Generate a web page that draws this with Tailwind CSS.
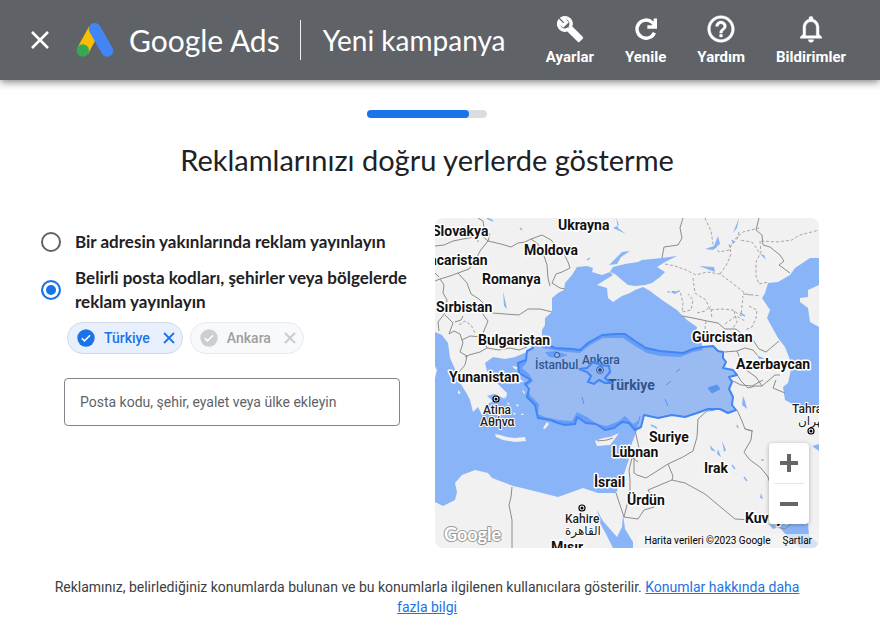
<!DOCTYPE html>
<html lang="tr">
  <head>
    <meta charset="UTF-8" />
    <meta name="viewport" content="width=device-width, initial-scale=1.0" />
    <title>Google Ads - Yeni kampanya</title>
    <script src="https://cdn.jsdelivr.net/npm/@tailwindcss/browser@4"></script>
  </head>
  <body class="min-h-screen bg-white font-['Roboto',sans-serif] text-[#202124]">

    <!-- Header -->
    <header class="flex h-20 items-center bg-[#5f6368] pl-7 pr-[34px] text-white shadow-[0_2px_8px_rgba(0,0,0,0.5)]">
      <button type="button" aria-label="Kapat" class="flex h-6 w-6 items-center justify-center">
        <svg class="h-[18px] w-[18px]" viewBox="0 0 18 18" fill="none" stroke="currentColor" stroke-width="2.6"><path d="M1 1l16 16M17 1L1 17"/></svg>
      </button>
      <a href="#" class="ml-6 flex items-center gap-[15px]">
        <svg class="h-[34px] w-[38px]" viewBox="0 0 38 34">
          <path d="M13 3.500L23.500 9.500L12 31L1.500 24.500z" fill="#fbbc04"/>
          <path d="M18.800 6L31.200 27.800" stroke="#4285f4" stroke-width="12" stroke-linecap="round"/>
          <circle cx="6.800" cy="27.500" r="6.200" fill="#34a853"/>
        </svg>
        <span class="font-['Lato',sans-serif] text-[30px] leading-10">Google Ads</span>
      </a>
      <div class="ml-5 h-10 w-px bg-white/90"></div>
      <h1 class="ml-[22px] whitespace-nowrap font-['Lato',sans-serif] text-[28px] leading-10">Yeni kampanya</h1>
      <nav class="ml-auto flex gap-[31px] text-[15px] font-bold leading-5">
        <button type="button" class="flex flex-col items-center gap-0.5">
          <svg class="h-8 w-8" viewBox="-2 -2 28 28" fill="currentColor" stroke="currentColor" stroke-width=".9"><path d="M22.610 18.990l-9.080-9.080c.93-2.340.45-5.100-1.440-7C9.790.610 6.210.400 3.660 2.260L7.500 6.110 6.080 7.520 2.250 3.690C.390 6.230.600 9.820 2.900 12.110c1.860 1.860 4.570 2.350 6.890 1.480l9.110 9.110c.39.39 1.020.39 1.410 0l2.300-2.300c.4-.38.4-1.010 0-1.410zm-3 1.600l-9.460-9.460c-.61.45-1.290.72-2 .82-1.360.2-2.790-.21-3.830-1.250C3.370 9.760 2.930 8.500 3 7.260l3.090 3.090 4.240-4.240-3.090-3.090c1.240-.07 2.490.37 3.440 1.310 1.080 1.080 1.490 2.570 1.240 3.960-.12.71-.42 1.370-.88 1.960l9.450 9.450-.88.89z"/><path d="M11 11l8.700 8.700" stroke-width="3.500"/></svg>
          Ayarlar
        </button>
        <button type="button" class="flex flex-col items-center gap-0.5">
          <svg class="h-8 w-8" viewBox="0 0 24 24" fill="none" stroke="currentColor" stroke-width="2.500"><path d="M18.300 14.800A6.800 6.800 0 1 1 16.800 7.200l1.700 1.900M19 4.200v6.300H13"/></svg>
          Yenile
        </button>
        <button type="button" class="flex flex-col items-center gap-0.5">
          <svg class="h-8 w-8" viewBox="0 0 24 24" fill="currentColor" stroke="currentColor" stroke-width=".3"><path d="M11 18h2v-2h-2v2zm1-16C6.480 2 2 6.480 2 12s4.480 10 10 10 10-4.480 10-10S17.520 2 12 2zm0 18c-4.410 0-8-3.590-8-8s3.590-8 8-8 8 3.590 8 8-3.590 8-8 8zm0-14c-2.210 0-4 1.790-4 4h2c0-1.100.9-2 2-2s2 .9 2 2c0 2-3 1.750-3 5h2c0-2.250 3-2.500 3-5 0-2.210-1.790-4-4-4z"/></svg>
          Yardım
        </button>
        <button type="button" class="flex flex-col items-center gap-0.5">
          <svg class="h-8 w-8" viewBox="0 0 24 24" fill="currentColor" stroke="currentColor" stroke-width=".3"><path d="M12 22c1.100 0 2-.9 2-2h-4c0 1.100.9 2 2 2zm6-6v-5c0-3.070-1.630-5.640-4.500-6.320V4c0-.83-.67-1.500-1.500-1.500s-1.500.67-1.500 1.500v.68C7.640 5.360 6 7.920 6 11v5l-2 2v1h16v-1l-2-2zm-2 1H8v-6c0-2.480 1.510-4.500 4-4.500s4 2.020 4 4.500v6z"/></svg>
          Bildirimler
        </button>
      </nav>
    </header>

    <main class="pl-[35px] pr-[61px] pt-[30px]">
      <!-- Progress -->
      <div class="mx-auto h-2 w-[120px] rounded-full bg-[#dadce0]">
        <div class="h-2 w-[102px] rounded-full bg-[#1a73e8]"></div>
      </div>

      <h2 class="mt-6 text-center font-['Lato',sans-serif] text-[29px] leading-9">Reklamlarınızı doğru yerlerde gösterme</h2>

      <div class="mt-10 grid grid-cols-[1fr_384px] gap-6">
        <!-- Location options -->
        <div class="pl-1.5 pt-3">
          <label class="flex items-center gap-3.5 font-['Lato',sans-serif] text-[17px] font-bold leading-6">
            <input type="radio" name="target" class="h-5 w-5 shrink-0 appearance-none rounded-full border-2 border-[#5f6368]" />
            Bir adresin yakınlarında reklam yayınlayın
          </label>
          <label class="mt-3 flex items-center gap-3.5 font-['Lato',sans-serif] text-[17px] font-bold leading-6">
            <input type="radio" name="target" checked class="h-5 w-5 shrink-0 appearance-none rounded-full border-2 border-[#1a73e8] bg-[#1a73e8] shadow-[inset_0_0_0_3px_white]" />
            Belirli posta kodları, şehirler veya bölgelerde reklam yayınlayın
          </label>

          <div class="ml-[26px] mt-2 flex gap-[7px] text-sm font-medium">
            <div class="flex h-8 items-center rounded-full border border-[#d2d9e5] bg-[#e8f0fe] pl-[9px] pr-[7px] text-[#1a73e8]">
              <svg class="h-[18px] w-[18px]" viewBox="0 0 18 18"><circle cx="9" cy="9" r="8.700" fill="#1a73e8"/><path d="M4.800 9.200l2.700 2.700 5.600-5.600" fill="none" stroke="#fff" stroke-width="1.500"/></svg>
              <span class="ml-[9px]">Türkiye</span>
              <button type="button" aria-label="Türkiye konumunu kaldır" class="ml-[13px]"><svg class="h-3 w-3" viewBox="0 0 12 12" fill="none" stroke="currentColor" stroke-width="1.800"><path d="M1 1l10 10M11 1L1 11"/></svg></button>
            </div>
            <div class="flex h-8 items-center rounded-full border border-[#e8eaed] bg-[#f8f9fa] pl-[9px] pr-[7px] text-[#9e9e9e]">
              <svg class="h-[18px] w-[18px]" viewBox="0 0 18 18"><circle cx="9" cy="9" r="8.700" fill="#ccced0"/><path d="M4.800 9.200l2.700 2.700 5.600-5.600" fill="none" stroke="#fff" stroke-width="1.500"/></svg>
              <span class="ml-[9px]">Ankara</span>
              <button type="button" aria-label="Ankara konumunu kaldır" class="ml-[13px] text-[#c8cacc]"><svg class="h-3 w-3" viewBox="0 0 12 12" fill="none" stroke="currentColor" stroke-width="1.800"><path d="M1 1l10 10M11 1L1 11"/></svg></button>
            </div>
          </div>

          <div class="ml-[23px] mr-[11px] mt-6">
            <input type="text" aria-label="Konum" placeholder="Posta kodu, şehir, eyalet veya ülke ekleyin" class="h-12 w-full rounded border border-[#80868b] px-[15px] text-sm placeholder:text-[#5f6368]" />
          </div>
        </div>

        <!-- Map -->
        <div class="relative h-[330px] overflow-hidden rounded-lg bg-[#f1f1f1]">
          <svg class="h-full w-full" viewBox="0 0 384 330" font-family="Roboto, sans-serif">
            <!-- Seas -->
            <g fill="#8ab4f8">
              <path d="M107 130L107 112L110 107L110 100L117 94L117 80L123 75L129 72L130 65L137 57L142 49L152 48L158 50L157 54L167 57L175 54L178 57L170 62L162 67L172 70L173 80L178 84L187 78L195 75L200 72L208 69L215 73L227 82L242 92L252 102L262 109L261 116L266 122L268 132L258 134L245 139L225 138L212 135L200 128L188 120L168 120L155 127L145 135L132 134L118 132z"/>
              <path d="M175 54L178 49L190 46L203 44L207 42L227 40L242 38L230 44L222 49L230 54L225 59L217 65L210 67L200 68L193 67L187 62L180 56z"/>
              <path d="M0 114L7 117L13 125L15 140L20 151L28 157L24 163L32 176L35 182L38 194L43 189L47 197L53 194L51 187L58 183L52 178L62 175L71 180L72 175L63 166L57 158L52 153L50 145L58 139L70 141L80 139L92 134L92 144L87 150L94 156L98 163L92 168L95 177L104 186L103 196L110 199L124 202L137 203L142 194L152 199L162 206L172 208L184 203L190 198L198 206L203 203L202 212L197 225L195 238L191 250L187 262L181 275L163 275L148 270L137 274L123 279L103 274L87 270L78 268L57 260L53 255L40 252L27 257L20 265L22 274L20 282L8 288L0 284z"/>
              <path d="M384 40L375 40L360 50L355 57L343 64L333 65L330 75L327 80L335 92L332 100L343 120L350 129L357 147L353 165L348 169L350 182L363 189L384 191L384 109L375 104L373 90L365 84L365 80L373 79L373 72L384 67z"/>
              <path d="M162 292L168 303L182 319L187 309L188 296L190 311L198 324L198 330L178 330L172 318L165 305z"/>
              <path d="M333 305L373 305L374 317L384 326L384 330L366 330L353 319L344 309L338 311z"/>
              <path d="M283 18L279 28L270 31L278 32L285 26zM304 0L298 15L302 10zM181 0L184 7L178 10L191 16L183 10zM195 33L186 39L182 46L174 47L181 40L187 34zM308 178L307 187L312 191L310 183zM283 231L286 239L282 236zM275 227L281 234L276 232zM268 205L277 212L273 209zM325 36L331 42L329 37zM335 42L341 48zM326 275L328 281L325 280zM264 48L280 54L279 49zM322 137L330 141L324 141zM287 223L291 232L289 234zM235 74L245 73L240 76zM68 73L72 91L69 88zM384 226L377 228L384 233zM110 134L120 133L133 137L124 140L114 139z"/>
              <path d="M85 10l2 2M42 17l1 7M128 12l12-7M52 0l6 3M118 80l2 2M152 42l3-2M297 22l2 3M216 207l6 3M297 247l3 4M309 259l3 4M326 242h3M302 207l1 3M305 95l5 3" stroke="#8ab4f8" stroke-width="1.500"/>
            </g>
            <!-- Islands -->
            <g fill="#f1f1f1">
              <path d="M60 216L65 217L72 219L80 220L90 219L91 223L80 224L68 222L61 219zM160 223L168 220L175 219L184 215L179 222L175 227L162 228zM108 210l4-6 2 2-4 5zM30 168L42 167L55 173L68 177L70 181L58 175L45 174L38 176zM77 148l6 1-2 3zM87 172l3 2-1 2zM67 152l3 2-4 1zM85 161l4 3-4 0zM72 184l3 2-2 1zM81 186l3 1-2 2zM78 194l3 2-2 1zM87 195l2 2-3 0z"/>
              <path d="M0 148l2 4-2 8zM20 160l2 4-3-1zM23 172l3 3-3 1z"/>
            </g>
            <!-- Country borders -->
            <g fill="none" stroke="#8c8c8c" stroke-width="1">
              <path d="M0 28L9 27L18 23L28 21L39 19L46 17L53 23L66 26L76 29L83 25L90 24L96 21L107 17L116 22L122 29L129 36L133 44L135 50L127 54L121 56L117 65L125 70L130 71"/>
              <path d="M96 21L103 26L108 35L112 47L113 60L115 68M53 23L45 33L40 43L34 51L23 55L15 58L5 61L0 63M23 55L32 65L36 76L44 81L49 86L47 93L58 95L70 96L84 97L93 91L105 91L117 94"/>
              <path d="M5 61L9 67L8 75L12 82L10 95L3 104L4 113M10 97L18 105L14 116L19 113L25 116L28 125L25 134L32 138L30 147L24 154M20 104L26 102L28 98M47 95L53 103L48 115L48 121L52 130L45 134L34 137L30 139M52 130L64 132L75 130L84 132L92 129M27 122L35 118L48 119"/>
              <path d="M43 0L48 3L49 10L39 12L31 13M49 10L55 16L53 23M0 55L4 59"/>
              <path d="M248 0L245 10L247 20L243 27L229 29L227 40M324 0L321 12L327 17L328 27L335 29L345 37L349 43L344 47L355 55"/>
              <path d="M247 98L258 100L272 103L283 105L290 111L301 111L308 117L318 122L324 131L331 134L344 123M289 134L302 133L310 130L318 132L322 137M302 133L307 146L311 152L321 159L327 168M301 155L306 163L313 170L320 168L327 168L340 157L345 157M341 162L338 170L350 175M296 162L306 167L317 168L328 162"/>
              <path d="M302 192L307 203L310 211L317 213L316 222L309 234L314 241L326 250L333 259L337 272M318 213L310 211M273 192L263 201L262 219L258 233L248 239L233 246L211 260L202 257L199 255M233 246L238 258L237 262L250 265L270 276L300 301L335 303L345 310M237 262L213 272L219 282L219 289L209 292L203 301L189 299M200 212L204 230L199 236L199 255M197 240L194 252L195 262L195 275L189 299M195 238L203 244M189 299L181 275M77 269L76 279L74 287L77 302L77 330M333 303L335 292L338 288M162 223L172 222L178 220M342 309L350 311L356 306"/>
            </g>
            <!-- Regional borders -->
            <g fill="none" stroke="#a5a5a5" stroke-width="1" stroke-dasharray="3 2">
              <path d="M230 46L240 48L251 52L261 57L272 54L285 56L296 64L311 76L325 78M270 0L276 13L278 26L284 34L294 32L299 22L308 14L324 10M304 14L302 21L294 30M258 60L260 75L271 82L275 92L286 91L298 92L306 98L308 78M308 76L316 77M326 23L342 24L357 22L365 17L384 12M325 23L326 34L321 44L321 58L324 66L333 64M324 34L317 24L304 22M232 74L245 73L248 85L247 94L256 92L258 82L253 76M262 95L270 93L276 88M285 56L292 46L296 36L294 25M299 93L302 104L298 110M314 88L322 92L321 100L317 109L310 112M276 91L277 101M290 106L301 98L310 103M271 103L269 118M24 107L30 103L36 107L40 115"/>
            </g>
            <!-- City and country names under the highlight -->
            <g fill="#000" stroke="#000" stroke-width=".8">
              <circle cx="122" cy="137" r="2.500" fill="#dfe9fb"/>
              <circle cx="165" cy="152" r="3.500" fill="#fff"/><circle cx="165" cy="152" r="1.500"/>
            </g>
            <g fill="#202124" font-weight="500">
              <text x="100" y="151" font-size="12">İstanbul</text>
              <text x="147" y="146" font-size="12">Ankara</text>
              <text x="173" y="172" font-size="14" font-weight="700">Türkiye</text>
            </g>
            <!-- Highlighted region -->
            <path d="M95 122L101 124L107 120L111 126L120 130L137 131L145 132L153 125L160 121L167 117L181 116L190 116L200 123L211 130L225 133L248 135L258 131L267 129L278 128L283 133L288 134L288 140L291 144L288 150L298 152L302 157L294 159L297 164L294 171L298 179L297 187L301 192L293 195L285 191L273 191L262 195L250 199L237 197L223 200L209 197L206 209L200 212L194 205L187 204L179 210L170 212L161 206L151 205L142 199L140 206L130 207L123 205L115 202L103 200L100 187L92 179L94 171L90 166L96 162L84 155L83 145L91 142L92 133L98 130z" fill="#4285f4" fill-opacity=".5" stroke="#4285f4" stroke-width="2" stroke-linejoin="round"/>
            <path d="M273 170L282 167L285 171L277 175zM231 167l5-4M230 181l3 7M272 193l8-1M241 154l4-3M205 198l-2 8M147 179l2 7" fill="#5b93f1" stroke="#5b93f1" stroke-width="1"/>
            <path d="M144 151L152 150L158 144L166 147L174 148L175 154L170 160L176 165L170 165L164 162L159 166L153 164L156 158L152 154z" fill="#4285f4" fill-opacity=".15" stroke="#4285f4" stroke-width="2"/>
            <!-- Labels -->
            <g fill="#111" stroke="#fff" stroke-width="3" stroke-linejoin="round" paint-order="stroke" font-weight="700" font-size="14">
              <text x="-3" y="18">Slovakya</text>
              <text x="123" y="12">Ukrayna</text>
              <text x="89" y="37">Moldova</text>
              <text x="-18" y="47">Macaristan</text>
              <text x="47" y="66">Romanya</text>
              <text x="1" y="94">Sırbistan</text>
              <text x="43" y="127">Bulgaristan</text>
              <text x="14" y="164">Yunanistan</text>
              <text x="257" y="124">Gürcistan</text>
              <text x="301" y="151">Azerbaycan</text>
              <text x="214" y="224">Suriye</text>
              <text x="177" y="239">Lübnan</text>
              <text x="159" y="269">İsrail</text>
              <text x="269" y="255">Irak</text>
              <text x="192" y="287">Ürdün</text>
              <text x="310" y="305">Kuveyt</text>
              <text x="116" y="334">Mısır</text>
            </g>
            <g fill="#222" stroke="#fff" stroke-width="2" stroke-linejoin="round" paint-order="stroke" font-weight="500" font-size="12">
              <text x="48" y="196">Atina</text>
              <text x="45" y="208">Αθήνα</text>
              <text x="130" y="305">Kahire</text>
              <text x="130" y="317" font-family="'DejaVu Sans', sans-serif" font-size="12" font-weight="400">القاهرة</text>
              <text x="357" y="195">Tahran</text>
              <text x="363" y="207" font-family="'DejaVu Sans', sans-serif" font-size="12" font-weight="400">تهران</text>
            </g>
            <g fill="#fff" stroke="#000" stroke-width="1.200">
              <circle cx="61" cy="181" r="3"/><circle cx="147" cy="290" r="3"/><circle cx="376" cy="213" r="3"/>
            </g>
            <circle cx="61" cy="181" r="1.500"/><circle cx="147" cy="290" r="1.500"/><circle cx="376" cy="213" r="1.500"/>
            <text x="9" y="323" font-family="Lato, sans-serif" font-size="18" font-weight="700" fill="#fff" stroke="#999" stroke-width="2" paint-order="stroke">Google</text>
          </svg>
          <!-- Zoom control -->
          <div class="absolute right-2.5 top-[225px] flex w-10 flex-col items-center rounded-sm bg-white text-[#666] shadow-[0_1px_4px_rgba(0,0,0,0.3)]">
            <button type="button" aria-label="Yakınlaştır" class="flex h-10 w-10 items-center justify-center"><svg class="h-[18px] w-[18px]" viewBox="0 0 18 18" fill="currentColor"><path d="M7 0h4v7h7v4h-7v7H7v-7H0V7h7z"/></svg></button>
            <div class="h-px w-[30px] bg-[#e6e6e6]"></div>
            <button type="button" aria-label="Uzaklaştır" class="flex h-10 w-10 items-center justify-center"><svg class="h-[18px] w-[18px]" viewBox="0 0 18 18" fill="currentColor"><path d="M0 7h18v4H0z"/></svg></button>
          </div>
          <!-- Attribution -->
          <div class="absolute bottom-0 right-0 flex h-3.5 items-center gap-3 bg-[#f5f5f5]/70 px-[7px] text-[10px] leading-[14px] text-black">
            <span>Harita verileri ©2023 Google</span>
            <a href="#">Şartlar</a>
          </div>
        </div>
      </div>

      <p class="mt-[29px] px-[7px] text-center text-sm leading-5 text-[#3c4043]">
        Reklamınız, belirlediğiniz konumlarda bulunan ve bu konumlarla ilgilenen kullanıcılara gösterilir.
        <a href="#" class="text-[#1a73e8] underline">Konumlar hakkında daha fazla bilgi</a>
      </p>
    </main>
  </body>
</html>
